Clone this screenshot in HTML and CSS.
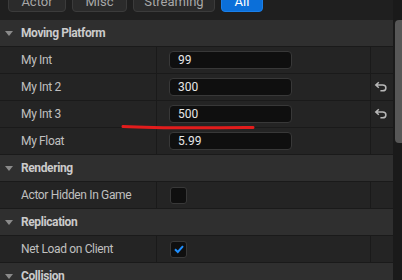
FILE: index.html
```html
<!DOCTYPE html>
<html>
<head lang="en">
    <meta charset="UTF-8">
    <title>Details</title>
    <link rel="stylesheet" href="styles.css">
</head>
<body>
<div id="window">
    <div id="main">
        <div class="tabs">
            <span class="tab">Actor</span>
            <span class="tab">Misc</span>
            <span class="tab tab-wide">Streaming</span>
            <span class="tab tab-on">All</span>
        </div>

        <div class="cat"><i class="arrow"></i>Moving Platform</div>
        <div class="row">
            <div class="name">My Int</div>
            <div class="value"><span class="box">99</span></div>
            <div class="reset"></div>
        </div>
        <div class="row">
            <div class="name">My Int 2</div>
            <div class="value"><span class="box">300</span></div>
            <div class="reset">
                <svg width="14" height="12" viewBox="0 0 14 12"><path d="M4.8 1.3 L1.8 4 L4.8 6.7 M2.2 4 H8.6 C10.8 4 11.9 5.3 11.9 6.9 C11.9 8.6 10.8 9.8 8.6 9.8 H6.4" fill="none" stroke="#b8b8b8" stroke-width="1.5"/></svg>
            </div>
        </div>
        <div class="row">
            <div class="name">My Int 3</div>
            <div class="value"><span class="box">500</span></div>
            <div class="reset">
                <svg width="14" height="12" viewBox="0 0 14 12"><path d="M4.8 1.3 L1.8 4 L4.8 6.7 M2.2 4 H8.6 C10.8 4 11.9 5.3 11.9 6.9 C11.9 8.6 10.8 9.8 8.6 9.8 H6.4" fill="none" stroke="#b8b8b8" stroke-width="1.5"/></svg>
            </div>
        </div>
        <div class="row">
            <div class="name">My Float</div>
            <div class="value"><span class="box">5.99</span></div>
            <div class="reset"></div>
        </div>

        <div class="cat"><i class="arrow"></i>Rendering</div>
        <div class="row">
            <div class="name">Actor Hidden In Game</div>
            <div class="value"><span class="check"></span></div>
            <div class="reset"></div>
        </div>

        <div class="cat"><i class="arrow"></i>Replication</div>
        <div class="row">
            <div class="name">Net Load on Client</div>
            <div class="value">
                <span class="check">
                    <svg width="14" height="14" viewBox="0 0 14 14"><path d="M3 7.2 L5.8 10 L11 4.2" fill="none" stroke="#1f8fff" stroke-width="2"/></svg>
                </span>
            </div>
            <div class="reset"></div>
        </div>

        <div class="cat"><i class="arrow"></i>Collision</div>
    </div>
    <div id="scroll"><div class="thumb"></div></div>

    <!-- red pen mark over the screenshot -->
    <svg class="mark" width="402" height="280" viewBox="0 0 402 280">
        <path d="M123 126.5 C160 128.5 200 128 253 127.5" fill="none" stroke="#e21c1c" stroke-width="3" stroke-linecap="round"/>
    </svg>
</div>
</body>
</html>
```

FILE: styles.css
```css
*{
    margin: 0;
    padding: 0;
    box-sizing: border-box;
}
body{
    background: #1f1f1f;
    font-family: Roboto, "Noto Sans", sans-serif;
    font-size: 12px;
    letter-spacing: -0.35px;
    color: #c0c0c0;
    overflow: hidden;
}
#window{
    position: relative;
    width: 402px;
    height: 280px;
    display: flex;
    overflow: hidden;
}
#main{
    width: 393px;
    flex: none;
}
#scroll{
    flex: 1;
    background: #1a1a1a;
    padding: 20px 0 0 2px;
}
#scroll .thumb{
    height: 123px;
    background: #575757;
    border-radius: 4px 0 0 4px;
}

.tabs{
    height: 20px;
    display: flex;
    gap: 6px;
    padding-left: 8px;
    background: #1f1f1f;
}
.tab{
    width: 58px;
    height: 24px;
    margin-top: -12px;
    background: #2b2b2b;
    border: 1px solid #3b3b3b;
    border-radius: 4px;
    color: #a8a8a8;
    font-size: 13px;
    letter-spacing: 0;
    text-align: center;
    line-height: 25px;
}
.tab:nth-child(2){
    width: 55px;
}
.tab-wide{
    width: 82px;
}
.tab-on{
    width: 42px;
    background: #0b6fd9;
    border-color: #1a7fe8;
    color: #fff;
}

.cat{
    height: 27px;
    display: flex;
    align-items: center;
    background: #2f2f2f;
    border-bottom: 1px solid #1a1a1a;
    font-weight: bold;
    letter-spacing: -0.4px;
    color: #cbcbcb;
}
.arrow{
    width: 0;
    height: 0;
    margin: 0 8px 0 5px;
    border-left: 4px solid transparent;
    border-right: 4px solid transparent;
    border-top: 5px solid #8a8a8a;
}

.row{
    height: 27px;
    display: flex;
    background: #242424;
    border-bottom: 1px solid #1a1a1a;
}
.name{
    width: 157px;
    padding-left: 21px;
    border-right: 1px solid #1a1a1a;
    display: flex;
    align-items: center;
}
.value{
    width: 214px;
    padding-left: 12px;
    border-right: 1px solid #1a1a1a;
    display: flex;
    align-items: center;
}
.reset{
    flex: 1;
    display: flex;
    align-items: center;
    padding-left: 3px;
}
.box{
    width: 123px;
    height: 18px;
    padding-left: 8px;
    background: #0f0f0f;
    border: 1px solid #383838;
    border-radius: 4px;
    color: #e6e6e6;
    letter-spacing: 0;
    line-height: 16px;
}
.check{
    width: 17px;
    height: 17px;
    margin-left: 1px;
    background: #0f0f0f;
    border: 1px solid #383838;
    border-radius: 3px;
    display: flex;
    align-items: center;
    justify-content: center;
}

.mark{
    position: absolute;
    left: 0;
    top: 0;
    pointer-events: none;
}
```
